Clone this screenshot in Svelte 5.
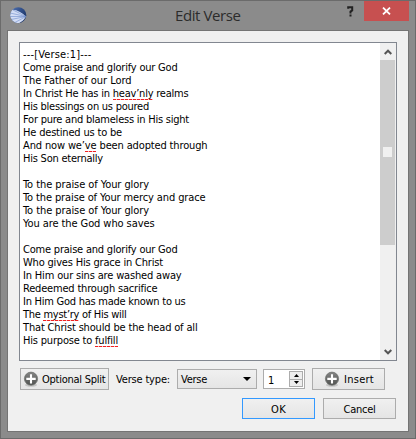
<script>
  const lines = [
    ['---[Verse:1]---', 68.5],
    ['Come praise and glorify our God', 154.5],
    ['The Father of our Lord', 108.5],
    ['In Christ He has in *heav’nly* realms', 165.5],
    ['His blessings on us poured', 126],
    ['For pure and blameless in His sight', 166],
    ['He destined us to be', 99],
    ['And now we’*ve* been adopted through', 184.5],
    ['His Son eternally', 80],
    ['', 0],
    ['To the praise of Your glory', 126],
    ['To the praise of Your mercy and grace', 182.5],
    ['To the praise of Your glory', 126],
    ['You are the God who saves', 131.5],
    ['', 0],
    ['Come praise and glorify our God', 154.5],
    ['Who gives His grace in Christ', 140],
    ['In Him our sins are washed away', 158.5],
    ['Redeemed through sacrifice', 134.5],
    ['In Him God has made known to us', 162.5],
    ['The *myst’ry* of His will', 103.5],
    ['That Christ should be the head of all', 174.5],
    ['His purpose to *fulfill*', 95]
  ];

  // Spreads the letters so that the text takes the given width.
  function fit(node, width) {
    if (!width) return;
    const natural = node.getBoundingClientRect().width;
    node.style.letterSpacing = (width - natural) / node.textContent.length + 'px';
  }
</script>

{#snippet plus()}
  <svg class="plus" width="16" height="16" viewBox="0 0 16 16">
    <defs>
      <linearGradient id="disc" x1="0" y1="0" x2="0" y2="1">
        <stop offset="0" stop-color="#858585" /><stop offset="1" stop-color="#505250" />
      </linearGradient>
    </defs>
    <ellipse cx="8" cy="14" rx="6" ry="1.7" fill="#c4c4c4" />
    <circle cx="8" cy="7.7" r="6.6" fill="url(#disc)" stroke="#6c6e6c" stroke-width=".7" />
    <path d="M8 3.2v9.4M3.3 7.9h9.4" stroke="#fff" stroke-width="2.1" />
  </svg>
{/snippet}

<div class="window">
  <header>
    <svg class="logo" width="17" height="17" viewBox="0 0 17 17">
      <defs>
        <linearGradient id="globe" x1="0" y1="0" x2="1" y2=".6">
          <stop offset="0" stop-color="#5778b8" /><stop offset=".6" stop-color="#2e4c86" /><stop offset="1" stop-color="#1c3464" />
        </linearGradient>
        <clipPath id="round"><circle cx="8.3" cy="8.2" r="8" /></clipPath>
      </defs>
      <g clip-path="url(#round)">
        <rect width="17" height="17" fill="url(#globe)" />
        <path d="M16 9.5C11 5 6 2 1 3L-1 9l3 5 4 3C11 16 14 13 16 9.5z" fill="#d3ddf5" />
        <path d="M16 9.5L3 3M16 9.5L0 6M16 9.5L0 9.5M16 9.5L1 12.5M16 9.5L4 16" stroke="#6f8dca" stroke-width=".6" />
      </g>
    </svg>
    <h1><span use:fit={65.5}>Edit Verse</span></h1>
    <svg class="help" width="8" height="11" viewBox="0 0 8 11"><path d="M1.2 2.7V1.2h4v3.2L3.5 5.6V7.4M3.5 8.6v2" fill="none" stroke="#222" stroke-width="2" /></svg>
    <button class="close" aria-label="Close">
      <svg width="9" height="8" viewBox="0 0 9 8"><path d="M1 .6L8 7.4M8 .6L1 7.4" stroke="#fff" stroke-width="1.8" /></svg>
    </button>
  </header>
  <main>
    <div class="editor">
      <div class="text">
        {#each lines as [text, width]}
          <div class="line"><span use:fit={width}>{#each text.split('*') as part, i}{#if i % 2}<u>{part}</u>{:else}{part}{/if}{/each}</span></div>
        {/each}
      </div>
      <div class="scroll">
        <div class="arrow"><svg width="8" height="6" viewBox="0 0 8 6"><path d="M.7 5L4 1.7 7.3 5" fill="none" stroke="#555" stroke-width="2" /></svg></div>
        <div class="thumb"><i></i></div>
        <div class="arrow end"><svg width="8" height="6" viewBox="0 0 8 6"><path d="M.7 1L4 4.3 7.3 1" fill="none" stroke="#555" stroke-width="2" /></svg></div>
      </div>
    </div>
    <div class="tools">
      <button class="btn split">{@render plus()}<span use:fit={63.5}>Optional Split</span></button>
      <label><span use:fit={54}>Verse type:</span></label>
      <div class="combo"><span use:fit={26}>Verse</span><svg width="8" height="4" viewBox="0 0 8 4"><path d="M0 0h8L4 4z" /></svg></div>
      <div class="spin"><span>1</span>
        <div class="steps">
          <b><svg width="5" height="3" viewBox="0 0 5 3"><path d="M0 3h5L2.5 0z" /></svg></b>
          <b><svg width="5" height="3" viewBox="0 0 5 3"><path d="M0 0h5L2.5 3z" /></svg></b>
        </div>
      </div>
      <button class="btn insert">{@render plus()}<span use:fit={30}>Insert</span></button>
    </div>
    <footer>
      <button class="btn ok"><span use:fit={15}>OK</span></button>
      <button class="btn"><span use:fit={32}>Cancel</span></button>
    </footer>
  </main>
</div>

<style>
  .window {
    box-sizing: border-box;
    width: 416px;
    height: 439px;
    padding: 0 6px 6px;
    border: 1px solid #6b6b6b;
    background: #8b8b8b;
    color: #000;
    font: 11px/13px "DejaVu Sans Condensed", "DejaVu Sans", sans-serif;
    font-stretch: condensed;
    overflow: hidden;
  }
  span { white-space: pre; display: inline-block; }
  svg { display: block; flex: none; }
  button { font: inherit; color: inherit; margin: 0; padding: 0; }
  header { display: flex; height: 29px; align-items: flex-start; }
  .logo { margin: 6px 0 0 3px; }
  h1 {
    margin: 4px 0 0 148px;
    width: 66px;
    font: 15px/20px "Open Sans", "Noto Sans", sans-serif;
    color: #2b2b2b;
  }
  .help { margin: 5px 0 0 106px; }
  .close {
    width: 45px;
    height: 20px;
    margin-left: 9px;
    border: 0;
    background: #c75050;
    display: flex;
    align-items: center;
    justify-content: center;
  }
  main {
    box-sizing: border-box;
    width: 402px;
    height: 402px;
    border: 1px solid #747474;
    background: #f0f0f0;
    padding: 11px;
  }
  .editor {
    box-sizing: border-box;
    width: 378px;
    height: 319px;
    border: 1px solid #828790;
    background: #fff;
    display: flex;
    justify-content: space-between;
  }
  .text { padding: 5px 0 0 3px; }
  .line { height: 13px; }
  .line span { height: 13px; vertical-align: top; }
  u {
    text-decoration: none;
    padding-bottom: 0;
    background: repeating-linear-gradient(90deg, #e22 0 3px, #fbb 3px 4px) 0 100% / 100% 1px no-repeat;
  }
  .scroll { width: 16px; background: #f0f0f0; display: flex; flex-direction: column; }
  .arrow { height: 17px; width: 15px; display: flex; align-items: center; justify-content: center; }
  .thumb { width: 15px; height: 185px; background: #cdcdcd; display: flex; align-items: center; justify-content: center; }
  .thumb i { width: 9px; height: 10px; background: #f0f0f0; margin-top: -1px; }
  .end { margin-top: auto; }
  .tools { display: flex; align-items: center; height: 22px; margin: 7px 0 0 1px; }
  .btn {
    box-sizing: border-box;
    width: 73px;
    height: 22px;
    border: 1px solid #acacac;
    background: linear-gradient(#f0f0f0, #e5e5e5);
    display: flex;
    align-items: center;
    justify-content: center;
  }
  .tools .btn { justify-content: flex-start; }
  .tools .btn span { margin-left: 4px; }
  .tools .split span { margin-left: 3px; }
  .split { width: 89px; padding-left: 2px; }
  .insert { margin-left: 7px; padding-left: 11px; }
  label { width: 61px; margin-left: 7px; }
  .combo {
    box-sizing: border-box;
    width: 80px;
    height: 20px;
    padding: 0 5px 0 3px;
    border: 1px solid #acacac;
    background: linear-gradient(#f0f0f0, #e5e5e5);
    display: flex;
    align-items: center;
    justify-content: space-between;
  }
  .spin {
    box-sizing: border-box;
    width: 42px;
    height: 20px;
    margin-left: 6px;
    padding: 1px 1px 1px 4px;
    border: 1px solid #acacac;
    background: #fff;
    display: flex;
    justify-content: space-between;
  }
  .spin span { margin-top: 3px; }
  .steps { width: 14px; display: flex; flex-direction: column; }
  .steps b {
    box-sizing: border-box;
    height: 8px;
    border: 1px solid #acacac;
    background: #eee;
    display: flex;
    flex: 1;
    align-items: center;
    justify-content: center;
  }
  .steps b + b { border-top: 0; }
  footer { display: flex; justify-content: flex-end; gap: 8px; margin: 8px 1px 0 0; }
  footer .btn { height: 21px; padding-top: 1px; }
  .ok { border-color: #3399ff; }
</style>
